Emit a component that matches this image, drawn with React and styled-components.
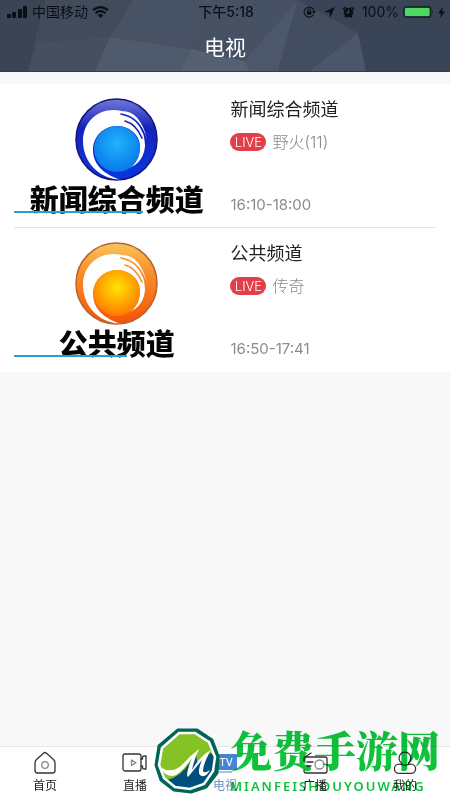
import React from 'react';
import styled, { createGlobalStyle } from 'styled-components';

const GlobalStyle = createGlobalStyle`
	* {
		box-sizing: border-box;
	}
	body {
		margin: 0;
		background: #f8f8f8;
		font-family: Inter, 'Noto Sans CJK SC', sans-serif;
		color: #222;
	}
`;

const Screen = styled.div`
	display: flex;
	flex-direction: column;
	min-height: 100vh;
`;

const Header = styled.header`
	position: relative;
	overflow: hidden;
	background: #424c5d;
	border-bottom: 1px solid #343c4b;
`;

const Facets = styled.svg`
	position: absolute;
	top: 0;
	left: 0;
	width: 100%;
	height: 100%;
`;

const StatusBar = styled.div`
	position: relative;
	display: grid;
	grid-template-columns: 1fr auto 1fr;
	align-items: center;
	height: 24px;
	padding: 0 5px 0 7px;
	color: #0b0e14;
	font-size: 14px;
	line-height: 24px;
`;

const StatusGroup = styled.div`
	display: flex;
	align-items: center;
	gap: ${props => props.$gap};
	justify-content: ${props => (props.$end ? 'flex-end' : 'flex-start')};
	white-space: nowrap;
`;

const Clock = styled.time`
	font-weight: 500;
	font-size: 14px;
`;

const Title = styled.h1`
	position: relative;
	margin: 0;
	height: 47px;
	line-height: 48px;
	font-size: 21px;
	font-weight: 400;
	text-align: center;
	color: #fff;
`;

const Main = styled.main`
	flex: 1;
	padding-top: 12px;
`;

const List = styled.ul`
	margin: 0;
	padding: 0 14px;
	list-style: none;
	background: #fff;
`;

const Item = styled.li`
	display: grid;
	grid-template-columns: 201fr 205fr;
	grid-template-rows: 115px;
	gap: 15px;
	height: 144px;
	padding: 14px 0;
	&:not(:last-child) {
		border-bottom: 1px solid #e2e2e2;
	}
`;

const Cover = styled.div`
	position: relative;
	display: flex;
	flex-direction: column;
	align-items: center;
	padding-left: 4px;
`;

const Brand = styled.span`
	font-size: 29px;
	line-height: 40px;
	font-weight: 900;
	white-space: nowrap;
	color: #050505;
`;

const Progress = styled.div`
	position: absolute;
	left: 0;
	bottom: 0;
	height: 2px;
	background: #2f9bd6;
`;

const Info = styled.div`
	display: flex;
	flex-direction: column;
`;

const Name = styled.h2`
	margin: 0;
	font-size: 18px;
	line-height: 24px;
	font-weight: 400;
`;

const Show = styled.p`
	display: flex;
	align-items: center;
	gap: 6px;
	margin: 8px 0 0;
	font-size: 16px;
	line-height: 24px;
	font-weight: 300;
	color: #888;
`;

const Live = styled.span`
	width: 36px;
	height: 18px;
	border-radius: 9px;
	background: #e23f48;
	color: #fff;
	font-size: 13px;
	line-height: 18px;
	text-align: center;
`;

const Hours = styled.time`
	margin-top: auto;
	font-size: 15px;
	line-height: 16px;
	font-weight: 400;
	color: #8c8c8c;
`;

const TabBar = styled.nav`
	position: relative;
	display: grid;
	grid-template-columns: repeat(5, 1fr);
	height: 54px;
	background: #fff;
	border-top: 1px solid #e6e6e6;
`;

const Tab = styled.a`
	display: flex;
	flex-direction: column;
	align-items: center;
	padding-top: 3px;
	font-size: 12px;
	line-height: 20px;
	text-decoration: none;
	color: ${props => (props.$active ? '#6f93bd' : '#222')};
`;

const Emblem = styled.div`
	position: absolute;
	left: 154px;
	bottom: 6px;
	height: 66px;
	pointer-events: none;
`;

const WatermarkText = styled.div`
	position: absolute;
	left: 230px;
	bottom: 8px;
	color: #0fc23c;
	white-space: nowrap;
	pointer-events: none;
	mix-blend-mode: multiply;
`;

const SiteName = styled.div`
	font-family: 'Noto Serif CJK SC', 'Noto Sans CJK SC', serif;
	font-size: 42px;
	line-height: 46px;
	margin-bottom: 8px;
	font-weight: 900;
`;

const SiteLatin = styled.div`
	font-family: 'Noto Sans', sans-serif;
	font-size: 13px;
	line-height: 12px;
	font-weight: 600;
	letter-spacing: 2px;
`;

const Signal = () => (
	<svg width="21" height="12" viewBox="0 0 21 12" fill="currentColor">
		<rect x="0" y="8" width="4" height="4" rx="1" />
		<rect x="5" y="6" width="4" height="6" rx="1" />
		<rect x="11" y="3" width="4" height="9" rx="1" />
		<rect x="16" y="0" width="4" height="12" rx="1" />
	</svg>
);

const Wifi = () => (
	<svg width="17" height="12" viewBox="0 0 17 12" fill="none" stroke="currentColor" strokeWidth="2.2">
		<path d="M1 4.2Q8.5-2 16 4.2M3.6 7.1Q8.5 3 13.4 7.1" />
		<path d="M8.5 12L5.8 9.2Q8.5 7 11.2 9.2Z" fill="currentColor" stroke="none" />
	</svg>
);

const RotationLock = () => (
	<svg width="14" height="12" viewBox="0 0 14 12" fill="none" stroke="currentColor" strokeWidth="1.1">
		<path d="M10.5 8.5A5 5 0 1 1 11 5" />
		<path d="M9 5h4l-2 3z" fill="currentColor" stroke="none" />
		<rect x="3.8" y="5.3" width="4.6" height="3.4" fill="currentColor" stroke="none" />
		<path d="M4.7 5.5V4.2a1.4 1.4 0 0 1 2.8 0v1.3" />
	</svg>
);

const Arrow = () => (
	<svg width="11" height="11" viewBox="0 0 11 11" fill="currentColor">
		<path d="M11 0L6 11L5.5 5.5L0 5Z" />
	</svg>
);

const Alarm = () => (
	<svg width="13" height="12" viewBox="0 0 13 12">
		<circle cx="6.5" cy="6.5" r="4.8" fill="currentColor" />
		<path d="M1 3.5L3.8 1M12 3.5L9.2 1M3 11.5l1.5-2M10 11.5l-1.5-2" stroke="currentColor" strokeWidth="1.5" />
		<path d="M6.7 3.5V6.8H4.4" fill="none" stroke="#596273" strokeWidth="0.9" />
	</svg>
);

const Battery = () => (
	<svg width="31" height="12" viewBox="0 0 31 12">
		<rect x="0.7" y="0.7" width="27" height="10.6" rx="2.4" fill="none" stroke="#142820" strokeWidth="1.4" />
		<rect x="2" y="2" width="24.5" height="8" rx="1" fill="#4bd963" />
		<path d="M29 4q2 2 0 4z" fill="#142820" />
	</svg>
);

const Bolt = () => (
	<svg width="7" height="11" viewBox="0 0 7 11" fill="currentColor">
		<path d="M5 0L0 6.3H3L2 11L7 4.5H4Z" />
	</svg>
);

const BallSvg = styled.svg`
	flex-shrink: 0;
`;

const Ball = ({ id, rim, top, base, core, edge }) => (
	<BallSvg width="83" height="83" viewBox="0 0 83 83" aria-hidden="true">
		<defs>
			<linearGradient id={id + 'Shell'} x1="0" y1="0" x2="0" y2="1">
				<stop offset="0" stopColor={top} />
				<stop offset="0.35" stopColor={base} />
				<stop offset="1" stopColor={edge} />
			</linearGradient>
			<radialGradient id={id + 'Core'} cx="0.5" cy="0.38" r="0.62">
				<stop offset="0" stopColor={core[0]} />
				<stop offset="1" stopColor={core[1]} />
			</radialGradient>
		</defs>
		<circle cx="41.5" cy="41.5" r="40.5" fill={'url(#' + id + 'Shell)'} stroke={rim} strokeWidth="1.5" />
		<path
			d="M39 81C20 77 8 61 8 43C8 25 21 12 39 12C57 12 70 28 70 48C69 61 61 70 48 71C59 67 66 58 65 47C64 36 54 28 42 28C28 28 18 39 18 52C18 66 28 76 45 81.5Z"
			fill="#fff"
		/>
		<circle cx="42" cy="51" r="23" fill={'url(#' + id + 'Core)'} />
		<path d="M47 13Q65 13 72 41Q66 21 47 13Z" fill="#fff" />
		<path d="M46 16Q62 19 68 34M50 23Q61 26 67 40" fill="none" stroke={base} strokeWidth="1.6" strokeLinecap="round" />
	</BallSvg>
);

const outline = {
	width: 26,
	height: 26,
	viewBox: '0 0 26 26',
	fill: 'none',
	stroke: '#333',
	strokeWidth: 1.3,
	strokeLinejoin: 'round',
	strokeLinecap: 'round'
};

const HomeIcon = () => (
	<svg {...outline}>
		<path d="M11.5 3.3Q13 1.7 14.5 3.3L21.5 9.5Q23 11 23 13V20.5Q23 23 20.5 23H5.5Q3 23 3 20.5V13Q3 11 4.5 9.5Z" />
		<circle cx="13" cy="15" r="3.3" stroke="#888" />
	</svg>
);

const LiveIcon = () => (
	<svg {...outline}>
		<rect x="1" y="4" width="18" height="17" rx="2" />
		<path d="M19 9h1.5V7.5Q20.5 6 22 6H24V19H22Q20.5 19 20.5 17.5V16H19" />
		<path d="M9.5 10L14 12.8L9.5 15.5Z" stroke="#888" />
	</svg>
);

const TvIcon = () => (
	<svg width="26" height="26" viewBox="0 0 26 26">
		<rect x="1" y="4" width="24" height="16" rx="1" fill="#4285d5" />
		<path d="M6 22h14" stroke="#78a3dc" strokeWidth="1.3" />
		<text x="14" y="16" textAnchor="middle" fontSize="10" fontWeight="500" fill="#fff">TV</text>
	</svg>
);

const RadioIcon = () => (
	<svg {...outline}>
		<path d="M3 7L9 3M2 11V9Q2 7 4 7H23Q25 7 25 9V21Q25 23 23 23H4Q2 23 2 21V20" />
		<path d="M5 12h6M5 16h4" />
		<circle cx="17.5" cy="14.5" r="4.5" stroke="#888" />
	</svg>
);

const MeIcon = () => (
	<svg {...outline}>
		<path d="M9.5 13A6 6 0 1 1 16.5 13" />
		<path d="M10 14.5Q8 14 7 14.2A4.6 4.6 0 0 0 7 23.4H19A4.6 4.6 0 0 0 19 14.2Q18 14 16 14.5Q13 16 10 14.5Z" />
	</svg>
);

const Logo = () => (
	<svg width="66" height="66" viewBox="0 0 66 66" aria-hidden="true">
		<path d="M24 2H43L58 12L64 28L63 45L52 59L37 64L20 62L7 52L2 37L5 18Z" fill="#006557" stroke="#006557" strokeWidth="3" strokeLinejoin="round" />
		<path d="M25 5H41L55 14L61 29L59 43L50 56L36 61L21 59L10 50L5 37L8 20Z" fill="#84c225" />
		<path d="M61 28L59 43L50 56L36 61L21 59L13 52Q29 49 42 25L43 34L56 25Z" fill="#00507b" />
		<path d="M25 5H41L55 14L61 29L59 43L50 56L36 61L21 59L10 50L5 37L8 20Z" fill="none" stroke="#fff" strokeWidth="2.5" />
		<path d="M6 39Q18 47 29 36Q37 27 45 21Q40 32 38 42Q46 28 57 22Q49 36 49 43Q50 46 56 42Q51 51 46 47Q43 44 48 32L34 49Q31 47 38 30Q26 47 19 48Q10 48 6 39Z" fill="#fff" />
	</svg>
);

const channels = [
	{
		name: '新闻综合频道',
		show: '野火(11)',
		hours: '16:10-18:00',
		progress: 64,
		ball: { id: 'news', rim: '#15157d', top: '#7278d8', base: '#1524ba', edge: '#0737df', core: ['#20b4ff', '#0878e8'] }
	},
	{
		name: '公共频道',
		show: '传奇',
		hours: '16:50-17:41',
		progress: 56,
		ball: { id: 'public', rim: '#b5652c', top: '#fac45c', base: '#f9912b', edge: '#f45208', core: ['#ffe500', '#ff7900'] }
	}
];

const tabs = [
	{ label: '首页', icon: HomeIcon },
	{ label: '直播', icon: LiveIcon },
	{ label: '电视', icon: TvIcon, active: true },
	{ label: '广播', icon: RadioIcon },
	{ label: '我的', icon: MeIcon }
];

const App = () => {
	return (
		<Screen>
			<GlobalStyle />
			<Header>
				<Facets viewBox="0 0 450 71" preserveAspectRatio="none" aria-hidden="true">
					<path d="M0 0H45L28 71H0Z" fill="#3a4454" />
					<path d="M45 0H133L110 37L38 43Z" fill="#414b5c" />
					<path d="M38 43L110 37L95 71H28Z" fill="#454f60" />
					<path d="M110 37L192 49L180 71H95Z" fill="#505a6d" />
					<path d="M133 0H218L192 49L110 37Z" fill="#475264" />
					<path d="M192 49L245 61L255 71H180Z" fill="#566073" />
					<path d="M218 0H298L244 61L192 49Z" fill="#475164" />
					<path d="M298 0L278 71H250L244 61Z" fill="#4d576a" />
					<path d="M298 0L358 33L310 71H278Z" fill="#434d60" />
					<path d="M358 33L366 71H310Z" fill="#4c566a" />
					<path d="M298 0H450V71H366L358 33Z" fill="#3a4457" />
				</Facets>
				<StatusBar>
					<StatusGroup $gap="4px">
						<Signal />
						<span>中国移动</span>
						<Wifi />
					</StatusGroup>
					<Clock>下午5:18</Clock>
					<StatusGroup $gap="7px" $end>
						<RotationLock />
						<Arrow />
						<Alarm />
						<StatusGroup $gap="4px">
							<span>100%</span>
							<Battery />
							<Bolt />
						</StatusGroup>
					</StatusGroup>
				</StatusBar>
				<Title>电视</Title>
			</Header>
			<Main>
				<List>
					{channels.map(channel => (
						<Item key={channel.name}>
							<Cover>
								<Ball {...channel.ball} />
								<Brand>{channel.name}</Brand>
								<Progress style={{ width: channel.progress + '%' }} />
							</Cover>
							<Info>
								<Name>{channel.name}</Name>
								<Show>
									<Live>LIVE</Live>
									{channel.show}
								</Show>
								<Hours>{channel.hours}</Hours>
							</Info>
						</Item>
					))}
				</List>
			</Main>
			<TabBar>
				{tabs.map(({ label, icon: Icon, active }) => (
					<Tab key={label} href="#" $active={active}>
						<Icon />
						{label}
					</Tab>
				))}
				<WatermarkText>
					<SiteName>免费手游网</SiteName>
					<SiteLatin>MIANFEISHOUYOUWANG</SiteLatin>
				</WatermarkText>
				<Emblem>
					<Logo />
				</Emblem>
			</TabBar>
		</Screen>
	);
};

export default App;
